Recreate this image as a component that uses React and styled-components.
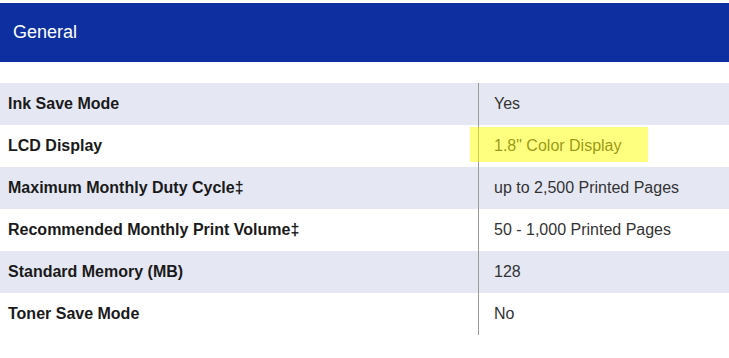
import React from "react";
import styled, { createGlobalStyle } from "styled-components";

const GlobalStyle = createGlobalStyle`
  html, body {
    margin: 0;
    padding: 0;
    background: #ffffff;
  }
  body {
    font-family: "Liberation Sans", Arial, sans-serif;
  }
`;

const Page = styled.div`
  width: 729px;
  padding-top: 3px;
`;

const SectionHeader = styled.div`
  height: 59px;
  background: #0d2f9f;
  color: #ffffff;
  display: flex;
  align-items: center;
  padding-left: 13px;
  font-size: 18px;
  margin-bottom: 21px;
`;

const SpecTable = styled.div`
  display: flex;
  flex-direction: column;
`;

const SpecRow = styled.div`
  display: grid;
  grid-template-columns: 478px 1fr;
  height: 42px;
  background: ${(p) => (p.$shaded ? "#e5e8f3" : "#ffffff")};
`;

const Label = styled.div`
  display: flex;
  align-items: center;
  padding-left: 8px;
  font-size: 16px;
  font-weight: bold;
  color: #1a1a1a;
`;

const Value = styled.div`
  position: relative;
  display: flex;
  align-items: center;
  padding-left: 15px;
  border-left: 1px solid #9a9a9a;
  font-size: 16px;
  color: #333333;
`;

/* translucent marker stroke laid over a value */
const Highlight = styled.span`
  position: absolute;
  left: -9px;
  top: 2px;
  width: 178px;
  height: 35px;
  background: rgba(255, 255, 0, 0.5);
  pointer-events: none;
`;

const specs = [
  { label: "Ink Save Mode", value: "Yes" },
  { label: "LCD Display", value: "1.8\" Color Display", marked: true },
  { label: "Maximum Monthly Duty Cycle‡", value: "up to 2,500 Printed Pages" },
  { label: "Recommended Monthly Print Volume‡", value: "50 - 1,000 Printed Pages" },
  { label: "Standard Memory (MB)", value: "128" },
  { label: "Toner Save Mode", value: "No" },
];

export default function App() {
  return (
    <>
      <GlobalStyle />
      <Page>
        <SectionHeader>General</SectionHeader>
        <SpecTable>
          {specs.map((s, i) => (
            <SpecRow key={s.label} $shaded={i % 2 === 0}>
              <Label>{s.label}</Label>
              <Value>
                {s.value}
                {s.marked && <Highlight />}
              </Value>
            </SpecRow>
          ))}
        </SpecTable>
      </Page>
    </>
  );
}
